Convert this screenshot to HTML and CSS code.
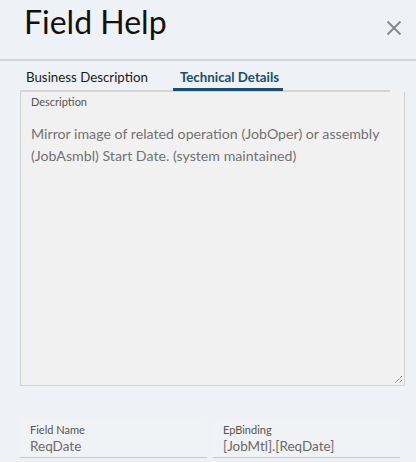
FILE: index.html
```html
<!DOCTYPE html>
<html>
<head>
<meta charset="utf-8">
<link rel="stylesheet" href="styles.css">
</head>
<body>
<div class="dialog">
  <header class="header">
    <h1 class="title">Field Help</h1>
    <button class="close" aria-label="Close">
      <svg width="16" height="16" viewBox="0 0 16 16"><path d="M1.5 1.5 L14.5 14.5 M14.5 1.5 L1.5 14.5" stroke="#8a8a8a" stroke-width="2" fill="none"/></svg>
    </button>
  </header>
  <div class="body">
    <nav class="tabs">
      <span class="tab">Business Description</span>
      <span class="tab active">Technical Details</span>
    </nav>
    <div class="textarea">
      <div class="ta-label">Description</div>
      <div class="ta-text">Mirror image of related operation (JobOper) or assembly (JobAsmbl) Start Date. (system maintained)</div>
      <svg class="grip" width="9" height="9" viewBox="0 0 9 9"><path d="M8 1 L1 8 M8 5 L5 8" stroke="#444" stroke-width="1" stroke-dasharray="1 1" fill="none"/></svg>
    </div>
    <div class="fields">
      <div class="field">
        <div class="f-label">Field Name</div>
        <div class="f-value">ReqDate</div>
      </div>
      <div class="field">
        <div class="f-label">EpBinding</div>
        <div class="f-value">[JobMtl].[ReqDate]</div>
      </div>
    </div>
  </div>
</div>
</body>
</html>
```
FILE: styles.css
```css
html, body {
  margin: 0;
  padding: 0;
  background: #eef1f5;
  font-family: Lato, "Noto Sans", sans-serif;
}
.dialog {
  width: 416px;
  height: 462px;
  overflow: hidden;
}
.header {
  display: flex;
  align-items: flex-start;
  justify-content: space-between;
  height: 59px;
  border-bottom: 2px solid #d2d4d6;
  padding: 0 14px 0 24px;
}
.title {
  margin: 0;
  padding-top: 2px;
  font-weight: 400;
  font-size: 32px;
  line-height: 40px;
  color: #111;
}
.close {
  margin-top: 20px;
  background: none;
  border: 0;
  padding: 0;
  width: 16px;
  height: 16px;
}
.body {
  padding: 0 11px 0 20px;
}
.tabs {
  display: flex;
  width: 370px;
  height: 31px;
  border-bottom: 2px solid #d4d4d4;
  box-sizing: border-box;
}
.tab {
  font-size: 13.3px;
  color: #1a1a1a;
  padding: 8px 0 0 6px;
  box-sizing: border-box;
  white-space: nowrap;
}
.tab.active {
  margin-left: 25px;
  width: 110px;
  height: 30px;
  padding-left: 7px;
  font-weight: 700;
  color: #1d4d6b;
  border-bottom: 3px solid #174d6e;
}
.textarea {
  position: relative;
  height: 294px;
  width: 385px;
  box-sizing: border-box;
  background: #f1f1f1;
  border: 1px solid #d3d3d3;
  border-top: 0;
  padding: 4px 10px;
}
.ta-label {
  font-size: 11px;
  color: #555;
  line-height: 12px;
}
.ta-text {
  margin-top: 15px;
  font-size: 14.2px;
  line-height: 22px;
  color: #727272;
}
.grip {
  position: absolute;
  right: 1px;
  bottom: 1px;
}
.fields {
  display: flex;
  gap: 6px;
  margin-top: 32px;
  width: 380px;
}
.field {
  flex: 1;
  background: #f0f2f5;
  border-bottom: 1px solid #c8c8c8;
  padding: 5px 10px 2px 10px;
}
.f-label {
  font-size: 11px;
  color: #555;
  line-height: 14px;
}
.f-value {
  font-size: 13.5px;
  color: #6a6a6a;
  line-height: 18px;
}
```
